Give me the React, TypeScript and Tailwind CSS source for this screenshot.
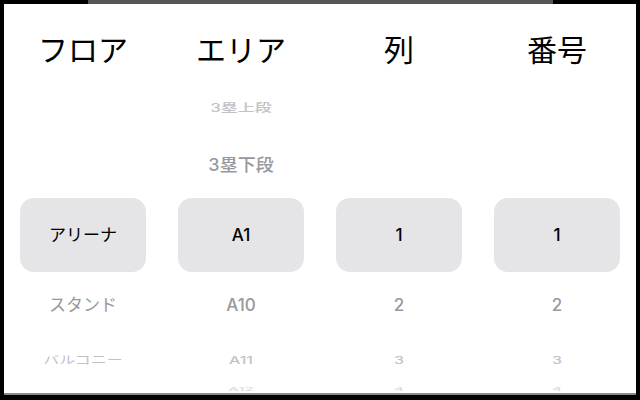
import React from "react";

interface PickerColumn {
    title: string;
    weight: string;
    items: string[];
}

const columns: PickerColumn[] = [
    { title: "フロア", weight: "font-normal", items: ["", "", "アリーナ", "スタンド", "バルコニー", ""] },
    { title: "エリア", weight: "font-medium", items: ["3塁上段", "3塁下段", "A1", "A10", "A11", "A12"] },
    { title: "列", weight: "font-medium", items: ["", "", "1", "2", "3", "4"] },
    { title: "番号", weight: "font-medium", items: ["", "", "1", "2", "3", "4"] },
];

// wheel rows: the further from the selection, the lighter and flatter
const rows = [
    { box: "h-[24px]", text: "text-[17px] text-[#c2c2c6] scale-y-[0.65]" },
    { box: "mt-[30px] h-[30px]", text: "text-[18px] text-[#98989d] scale-y-95" },
    { box: "mt-[18px] h-[74px] mx-[16px] rounded-[14px] bg-[#e5e5e8]", text: "text-[17px] text-black" },
    { box: "mt-[18px] h-[30px]", text: "text-[17px] text-[#98989d]" },
    { box: "mt-[28px] h-[24px]", text: "text-[16px] text-[#c2c2c6] scale-y-[0.68]" },
    { box: "mt-[10px] h-[14px]", text: "text-[15px] text-[#dcdcdc] scale-y-[0.35]" },
];

const Column = ({ column }: { column: PickerColumn }) => {
    return (
        <div className="flex flex-col">
            <div className="flex h-[92px] items-center justify-center text-[30px] font-normal text-black">
                {column.title}
            </div>
            {column.items.map((item, i) => (
                <div key={i} className={`flex shrink-0 items-center justify-center ${rows[i].box}`}>
                    <span className={`leading-none ${column.weight} ${rows[i].text}`}>{item}</span>
                </div>
            ))}
        </div>
    );
};

const App = () => {
    return (
        <div className="flex h-[400px] w-[640px] flex-col bg-black font-['Inter','Noto_Sans_CJK_JP',sans-serif]">
            <div className="flex h-[4px] shrink-0">
                <div className="ml-[88px] w-[465px] bg-[#555555]" />
            </div>
            <div className="mx-[4px] mb-[5px] flex-1 overflow-hidden border-b-2 border-[#8a8a8a] bg-white">
                <div className="grid grid-cols-4">
                    {columns.map(column => (
                        <Column key={column.title} column={column} />
                    ))}
                </div>
            </div>
        </div>
    );
};

export default App;
